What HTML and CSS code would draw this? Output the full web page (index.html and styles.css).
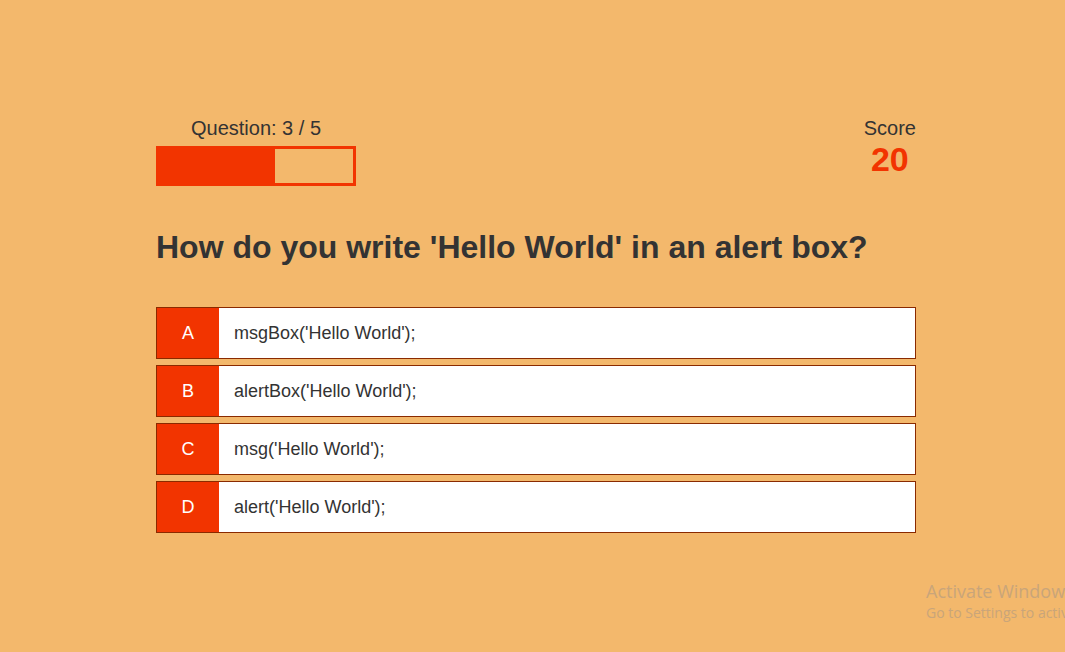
FILE: index.html
```html
<!DOCTYPE html>
<html>
<head>
<meta charset="utf-8">
<link rel="stylesheet" href="styles.css">
</head>
<body>
<main class="quiz">
  <header class="hud">
    <div class="progress-block">
      <p class="hud-label">Question: 3 / 5</p>
      <div class="bar"><div class="bar-fill" style="width:60%"></div></div>
    </div>
    <div class="score-block">
      <p class="hud-label">Score</p>
      <p class="score">20</p>
    </div>
  </header>
  <h1 class="question">How do you write 'Hello World' in an alert box?</h1>
  <ul class="choices">
    <li class="choice"><span class="prefix">A</span><span class="text">msgBox('Hello World');</span></li>
    <li class="choice"><span class="prefix">B</span><span class="text">alertBox('Hello World');</span></li>
    <li class="choice"><span class="prefix">C</span><span class="text">msg('Hello World');</span></li>
    <li class="choice"><span class="prefix">D</span><span class="text">alert('Hello World');</span></li>
  </ul>
</main>
<div class="watermark">
  <p class="wm-title">Activate Windows</p>
  <p class="wm-sub">Go to Settings to activate Windows.</p>
</div>
</body>
</html>
```

FILE: styles.css
```css
html, body {
  margin: 0;
  padding: 0;
  height: 100%;
}
body {
  background: #f3b86c;
  font-family: "Liberation Sans", Arial, sans-serif;
  color: #333333;
  overflow: hidden;
  position: relative;
}
.quiz {
  width: 760px;
  padding: 116px 0 0 156px;
}
.hud {
  display: flex;
  justify-content: space-between;
  align-items: flex-start;
}
.progress-block {
  width: 200px;
  display: flex;
  flex-direction: column;
  align-items: center;
}
.hud-label {
  margin: 0;
  font-size: 20px;
  line-height: 24px;
}
.bar {
  margin-top: 6px;
  width: 200px;
  height: 40px;
  box-sizing: border-box;
  border: 3px solid #f23400;
}
.bar-fill {
  height: 100%;
  background: #f23400;
}
.score-block {
  display: flex;
  flex-direction: column;
  align-items: center;
}
.score {
  margin: 1px 0 0;
  font-size: 34px;
  line-height: 36px;
  font-weight: bold;
  color: #f23400;
}
.question {
  margin: 41px 0 0;
  font-size: 32px;
  line-height: 40px;
  font-weight: bold;
}
.choices {
  list-style: none;
  margin: 40px 0 0;
  padding: 0;
  display: flex;
  flex-direction: column;
  gap: 6px;
}
.choice {
  display: flex;
  height: 52px;
  box-sizing: border-box;
  border: 1px solid #8a2a00;
  background: #ffffff;
  font-size: 18px;
}
.prefix {
  width: 62px;
  background: #f23400;
  color: #ffffff;
  display: flex;
  align-items: center;
  justify-content: center;
}
.text {
  display: flex;
  align-items: center;
  padding-left: 15px;
}
.watermark {
  position: absolute;
  left: 926px;
  top: 579px;
  white-space: nowrap;
  color: #c9a57a;
  font-family: "Open Sans", "DejaVu Sans", sans-serif;
}
.wm-title {
  margin: 0;
  font-size: 18px;
  line-height: 24px;
}
.wm-sub {
  margin: 0;
  font-size: 14px;
  line-height: 20px;
}
```
